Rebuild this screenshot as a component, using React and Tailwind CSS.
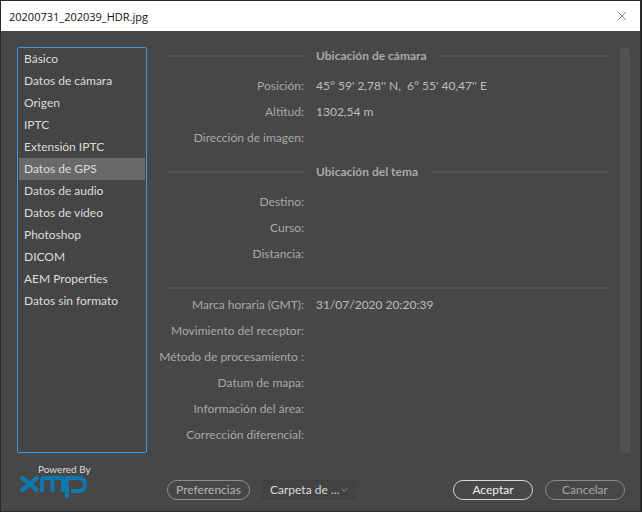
import React from 'react';
import { ChevronDown, X } from 'lucide-react';

const sections = ['Básico', 'Datos de cámara', 'Origen', 'IPTC', 'Extensión IPTC', 'Datos de GPS', 'Datos de audio', 'Datos de vídeo', 'Photoshop', 'DICOM', 'AEM Properties', 'Datos sin formato'];

function Row({ label, value }) {
  return (
    <div className="flex h-[26px] items-center">
      <div className="flex w-[137px] shrink-0 justify-end whitespace-nowrap text-[#a9a9a9]">{label}</div>
      <div className="ml-[12px] whitespace-pre text-[#bdbdbd]">{value}</div>
    </div>
  );
}

function Heading({ children }) {
  return (
    <div className="flex h-[18px] items-center">
      <div className="h-[2px] w-[138px] bg-[#535353]" />
      <div className="ml-[11px] whitespace-nowrap font-bold text-[#a9a9a9]">{children}</div>
      <div className="ml-[14px] h-[2px] flex-1 bg-[#535353]" />
    </div>
  );
}

function XmpLogo() {
  return (
    <svg width="68" height="24" viewBox="0 0 68 24" fill="none" stroke="#0f78ad">
      <path d="M2 2 L19 16 M19 2 L2 16" strokeWidth="4.5" />
      <path d="M23 17 V5 Q23 3 26 3 H42 Q44 3 44 5 V17 M33.5 3 V17" strokeWidth="4" />
      <path d="M48 23 V3 H59 Q66 3 66 9.5 Q66 16 59 16 H52" strokeWidth="4" />
      <path d="M49 9.5 H58" strokeWidth="2" stroke="#444" />
    </svg>
  );
}

export default function App() {
  return (
    <div className="flex h-[512px] w-[642px] flex-col overflow-hidden border-t border-r-2 border-b border-l border-[#2a2a2a] bg-[#474747] font-['Lato','Noto_Sans',sans-serif] text-[12px] leading-none">
      <div className="flex h-[30px] shrink-0 items-center justify-between bg-white pr-[11px] pl-[8px] font-['Open_Sans',sans-serif] text-[#111]">
        <span className="text-[11px]">20200731_202039_HDR.jpg</span>
        <X size={14} strokeWidth={1} color="#111" />
      </div>

      <div className="flex flex-1 pt-[16px] pl-[16px]">
        <div className="flex w-[130px] shrink-0 flex-col">
          <div className="h-[406px] rounded-[2px] border border-[#3f97dc] bg-[#454545] px-px">
            {sections.map((s) => (
              <div key={s} className={`flex h-[22px] items-center pl-[5px] text-[#dcdcdc] ${s === 'Datos de GPS' ? 'bg-[#696969]' : ''}`}>{s}</div>
            ))}
          </div>
          <div className="mt-[11px] flex flex-col items-start">
            <div className="ml-[21px] text-[10px] text-[#dedede]">Powered By</div>
            <div className="mt-[1px] ml-[2px]"><XmpLogo /></div>
          </div>
        </div>

        <div className="ml-[20px] flex flex-1 flex-col">
          <div className="flex h-[406px]">
            <div className="w-[442px] shrink-0">
              <Heading>Ubicación de cámara</Heading>
              <div className="mt-[8px]">
                <Row label="Posición:" value="45° 59' 2,78'' N,  6° 55' 40,47'' E" />
                <Row label="Altitud:" value="1302,54 m" />
                <Row label="Dirección de imagen:" />
              </div>
              <div className="mt-[12px]"><Heading>Ubicación del tema</Heading></div>
              <div className="mt-[8px]">
                <Row label="Destino:" />
                <Row label="Curso:" />
                <Row label="Distancia:" />
              </div>
              <div className="mt-[20px] h-[2px] bg-[#535353]" />
              <div className="mt-[3px]">
                <Row label="Marca horaria (GMT):" value="31/07/2020 20:20:39" />
                <Row label="Movimiento del receptor:" />
                <Row label="Método de procesamiento :" />
                <Row label="Datum de mapa:" />
                <Row label="Información del área:" />
                <Row label="Corrección diferencial:" />
              </div>
            </div>
            <div className="ml-[11px] h-full w-[10px] rounded-t-full bg-[#525252]" />
          </div>

          <div className="mt-[27px] flex items-center">
            <button className="h-[20px] w-[83px] rounded-full border border-[#8f8f8f] text-[#b4b4b4]">Preferencias</button>
            <div className="ml-[12px] flex h-[20px] w-[94px] items-center justify-between rounded-[2px] border border-[#3f3f3f] bg-[#434343] pr-[5px] pl-[7px] text-[#dcdcdc]">
              <span className="whitespace-nowrap">Carpeta de ...</span>
              <ChevronDown size={12} strokeWidth={1.2} color="#c8c8c8" />
            </div>
            <button className="ml-[97px] h-[20px] w-[80px] rounded-full border border-[#d8d8d8] text-[#f0f0f0]">Aceptar</button>
            <button className="ml-[12px] h-[20px] w-[80px] rounded-full border border-[#8a8a8a] text-[#a6a6a6]">Cancelar</button>
          </div>
        </div>
      </div>
    </div>
  );
}
